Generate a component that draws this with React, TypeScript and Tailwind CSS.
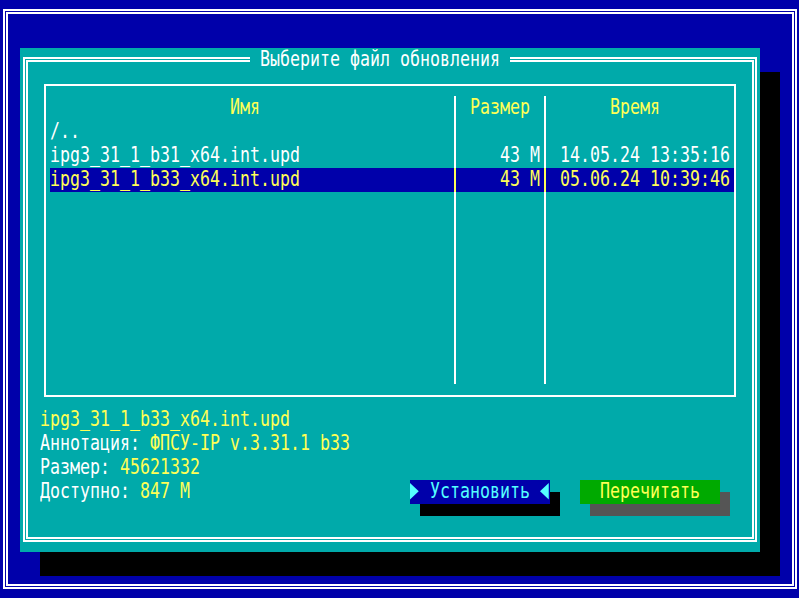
import type { ReactNode } from "react";

type FileRow = { name: string; size: string; time: string; selected?: boolean };

const files: FileRow[] = [
  { name: "/..", size: "", time: "" },
  { name: "ipg3_31_1_b31_x64.int.upd", size: "43 M", time: "14.05.24 13:35:16" },
  { name: "ipg3_31_1_b33_x64.int.upd", size: "43 M", time: "05.06.24 10:39:46", selected: true },
];

// the list always shows 11 lines under the header
const rows: FileRow[] = [
  ...files,
  ...Array.from({ length: 11 - files.length }, () => ({ name: "", size: "", time: "" })),
];

// text-mode glyphs are tall and narrow: 10px cell, stretched vertically
function T({ children, className = "" }: { children: ReactNode; className?: string }) {
  return (
    <span className={`inline-block origin-center scale-y-125 whitespace-pre ${className}`}>
      {children}
    </span>
  );
}

function Sep({ line }: { line: string }) {
  return (
    <div className="h-6 w-[10px] shrink-0 pl-[4px]">
      <div className={`h-full w-[2px] ${line}`} />
    </div>
  );
}

function Arrow({ dir }: { dir: "right" | "left" }) {
  return (
    <svg width="10" height="24" viewBox="0 0 10 24" className="shrink-0">
      {dir === "right" ? (
        <polygon points="0,3 8.75,11.25 0,19.5" fill="#55FFFF" />
      ) : (
        <polygon points="8.75,3 0,11.25 8.75,19.5" fill="#55FFFF" />
      )}
    </svg>
  );
}

export default function App() {
  return (
    <div className="flex h-[598px] w-[799px] bg-[#0000AA] pb-[9px] pl-[3px] pr-[2px] pt-[9px] font-['DejaVu_Sans_Mono','Liberation_Mono',monospace] text-[16.61px] leading-6">
      {/* screen frame */}
      <div className="flex flex-1 border-2 border-white p-px">
        <div className="flex-1 border-2 border-white pl-[12px] pt-[34px]">
          {/* dialog */}
          <div className="relative flex h-[504px] w-[740px] bg-[#00AAAA] pb-[10px] pl-[3px] pr-[3px] pt-[9px] shadow-[20px_24px_0_#000]">
            <div className="flex flex-1 border-2 border-white p-px">
              <div className="flex-1 border-2 border-white">
                {/* file list */}
                <div className="ml-[16px] mt-[22px] h-[313px] w-[692px] border-2 border-white pl-[4px] pt-[10px]">
                  <div className="flex h-6 text-[#FFFF55]">
                    <div className="w-[400px] pl-[180px]"><T>Имя</T></div>
                    <Sep line="bg-white" />
                    <div className="w-[80px] pl-[10px]"><T>Размер</T></div>
                    <Sep line="bg-white" />
                    <div className="w-[180px] pl-[60px]"><T>Время</T></div>
                  </div>
                  {rows.map((r, i) => (
                    <div
                      key={i}
                      className={`flex h-6 ${r.selected ? "bg-[#0000AA] text-[#FFFF55]" : "text-white"}`}
                    >
                      <div className="w-[400px]"><T>{r.name}</T></div>
                      <Sep line={r.selected ? "bg-[#FFFF55]" : "bg-white"} />
                      <div className="w-[80px] text-right"><T>{r.size}</T></div>
                      <Sep line={r.selected ? "bg-[#FFFF55]" : "bg-white"} />
                      <div className="w-[180px] pl-[10px]"><T>{r.time}</T></div>
                    </div>
                  ))}
                </div>

                {/* selected file info */}
                <div className="ml-[12px] mt-[11px] text-white">
                  <div className="h-6 text-[#FFFF55]"><T>ipg3_31_1_b33_x64.int.upd</T></div>
                  <div className="h-6">
                    <T>Аннотация: </T>
                    <T className="text-[#FFFF55]">ФПСУ-IP v.3.31.1 b33</T>
                  </div>
                  <div className="h-6">
                    <T>Размер: </T>
                    <T className="text-[#FFFF55]">45621332</T>
                  </div>
                  <div className="flex h-6">
                    <div className="w-[370px]">
                      <T>Доступно: </T>
                      <T className="text-[#FFFF55]">847 M</T>
                    </div>
                    <div className="flex h-6 w-[140px] bg-[#0000AA] text-[#55FFFF] shadow-[10px_12px_0_#000]">
                      <Arrow dir="right" />
                      <div className="flex-1 pl-[10px]"><T>Установить</T></div>
                      <Arrow dir="left" />
                    </div>
                    <div className="ml-[30px] h-6 w-[140px] bg-[#00AA00] pl-[20px] text-[#FFFF55] shadow-[10px_12px_0_#555555]">
                      <T>Перечитать</T>
                    </div>
                  </div>
                </div>
              </div>
            </div>

            {/* title sits over the top frame line */}
            <div className="absolute left-[230px] top-0 h-6 bg-[#00AAAA] px-[10px] text-white">
              <T>Выберите файл обновления</T>
            </div>
          </div>
        </div>
      </div>
    </div>
  );
}
